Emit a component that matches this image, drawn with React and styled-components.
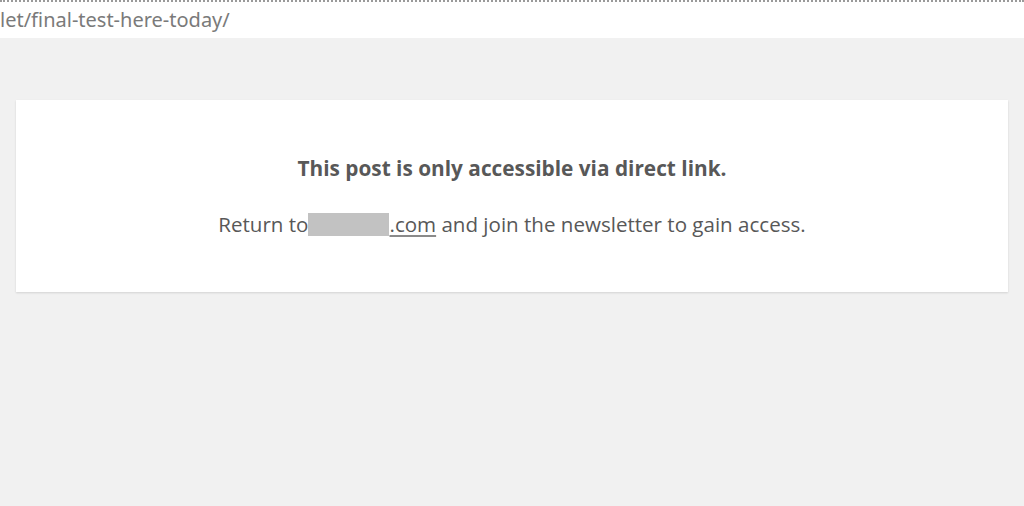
import styled, { createGlobalStyle } from "styled-components"

const GlobalStyle = createGlobalStyle`
html, body {
  margin: 0;
  padding: 0;
  background: #f1f1f1;
  font-family: 'Open Sans', 'Noto Sans', sans-serif;
}
`

const Page = styled.div`
width: 1024px;
height: 506px;
background: #f1f1f1;
overflow: hidden;
`

const AddressBar = styled.div`
height: 38px;
background: #ffffff;
border-top: 2px dotted #9a9a9a;
display: flex;
align-items: center;
padding-bottom: 2px;
box-sizing: border-box;
font-family: 'Noto Sans', 'Open Sans', sans-serif;
font-size: 20px;
color: #7a7a7a;
white-space: nowrap;
`

const Content = styled.main`
padding: 62px 16px 0 16px;
`

const Card = styled.section`
background: #ffffff;
height: 192px;
box-shadow: 0 1px 2px rgba(0, 0, 0, 0.13);
display: flex;
flex-direction: column;
align-items: center;
padding-top: 54px;
box-sizing: border-box;
color: #585858;
`

const Title = styled.p`
margin: 0;
font-weight: 700;
font-size: 20.8px;
line-height: 28px;
`

const Message = styled.p`
margin: 28px 0 0 0;
font-size: 20.55px;
line-height: 28px;
display: flex;
align-items: center;
`

const Redacted = styled.span`
display: inline-block;
width: 81px;
height: 23px;
background: #c2c2c2;
`

const Link = styled.a`
color: #585858;
text-decoration: underline;
text-decoration-color: #8a8a8a;
text-underline-offset: 3px;
`

export default function App() {
  return (
    <Page>
      <GlobalStyle />
      <AddressBar>let/final-test-here-today/</AddressBar>
      <Content>
        <Card>
          <Title>This post is only accessible via direct link.</Title>
          <Message>
            Return to<Redacted />
            <Link href="#">.com</Link>
            &nbsp;and join the newsletter to gain access.
          </Message>
        </Card>
      </Content>
    </Page>
  )
}
